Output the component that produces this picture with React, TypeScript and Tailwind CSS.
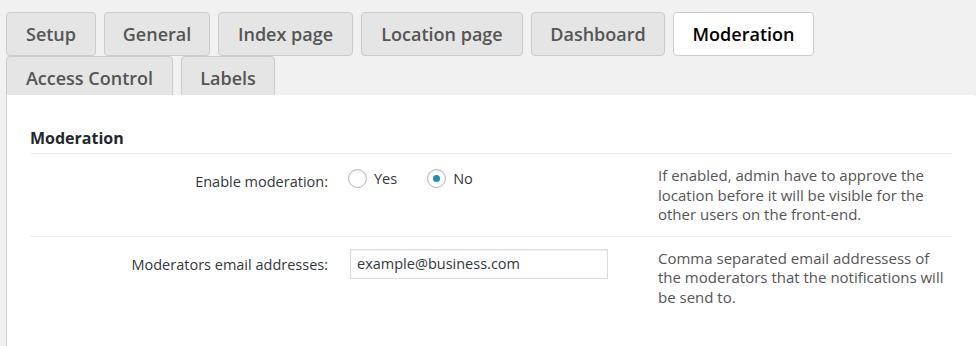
import { useState } from "react";

const tabs = [
    { name: "Setup", w: "w-[90px]" },
    { name: "General", w: "w-[106px]" },
    { name: "Index page", w: "w-[135px]" },
    { name: "Location page", w: "w-[162px]" },
    { name: "Dashboard", w: "w-[134px]" },
    { name: "Moderation", w: "w-[141px]" },
    { name: "Access Control", w: "w-[167px]" },
    { name: "Labels", w: "w-[94px]" },
];

function Radio({ label, checked, onClick }: { label: string, checked: boolean, onClick: () => void }) {
    return <label onClick={onClick} className="flex items-center gap-[7px] cursor-pointer">
        <span className="w-[19px] h-[19px] rounded-full border border-[#b4b9be] bg-white shadow-[inset_0_1px_2px_rgba(0,0,0,0.1)] flex items-center justify-center">
            {checked && <span className="w-[7px] h-[7px] rounded-full bg-[#1e8cbe]" />}
        </span>
        <span>{label}</span>
    </label>
}

export default function App() {
    const [active, setActive] = useState("Moderation");
    const [moderation, setModeration] = useState(false);
    const [emails, setEmails] = useState("example@business.com");

    return <>
        <div className="w-full h-[346px] overflow-hidden bg-[#f1f1f1] pt-[12px] pl-[6px] font-['Open_Sans',sans-serif]">
            <div className="flex flex-wrap gap-x-[8px] w-[820px]">
                {tabs.map((t) => (
                    <button key={t.name} onClick={() => setActive(t.name)}
                        className={`${t.w} h-[44px] rounded-[4px] border border-[#ccc] text-[18px] font-semibold flex items-center justify-center ${active === t.name ? "bg-white text-black" : "bg-[#e5e5e5] text-[#555]"}`}>
                        {t.name}
                    </button>
                ))}
            </div>
            <div className="-mt-[5px] relative bg-white border-l border-[#ccc] rounded-tr-[4px] h-[300px] pt-[32px] pl-[23px] pr-[24px] text-[14.5px] text-[#32373c]">
                <h2 className="text-[16px] font-bold text-[#23282d] pb-[4px] border-b border-[#eee] leading-[22px]">Moderation</h2>
                <div className="grid grid-cols-[320px_308px_1fr] items-start border-b border-[#eee] pt-[12px] pb-[11px]">
                    <div className="text-right pr-[22px] pt-[5px]">Enable moderation:</div>
                    <div className="flex items-start gap-[30px] pt-[2px] -ml-[2px]">
                        <Radio label="Yes" checked={moderation} onClick={() => setModeration(true)} />
                        <Radio label="No" checked={!moderation} onClick={() => setModeration(false)} />
                    </div>
                    <p className="text-[15px] leading-[19.5px] text-[#555]">If enabled, admin have to approve the location before it will be visible for the other users on the front-end.</p>
                </div>
                <div className="grid grid-cols-[320px_308px_1fr] items-start pt-[12px]">
                    <label htmlFor="emails" className="text-right pr-[22px] pt-[5px]">Moderators email addresses:</label>
                    <div>
                        <input id="emails" value={emails} onChange={(e) => setEmails(e.target.value)}
                            className="w-[258px] h-[30px] px-[6px] border border-[#ddd] shadow-[inset_0_1px_2px_rgba(0,0,0,0.07)] text-[#32373c] outline-none" />
                    </div>
                    <p className="text-[15px] leading-[19.5px] text-[#555]">Comma separated email addressess of the moderators that the notifications will be send to.</p>
                </div>
            </div>
        </div>
    </>
}
